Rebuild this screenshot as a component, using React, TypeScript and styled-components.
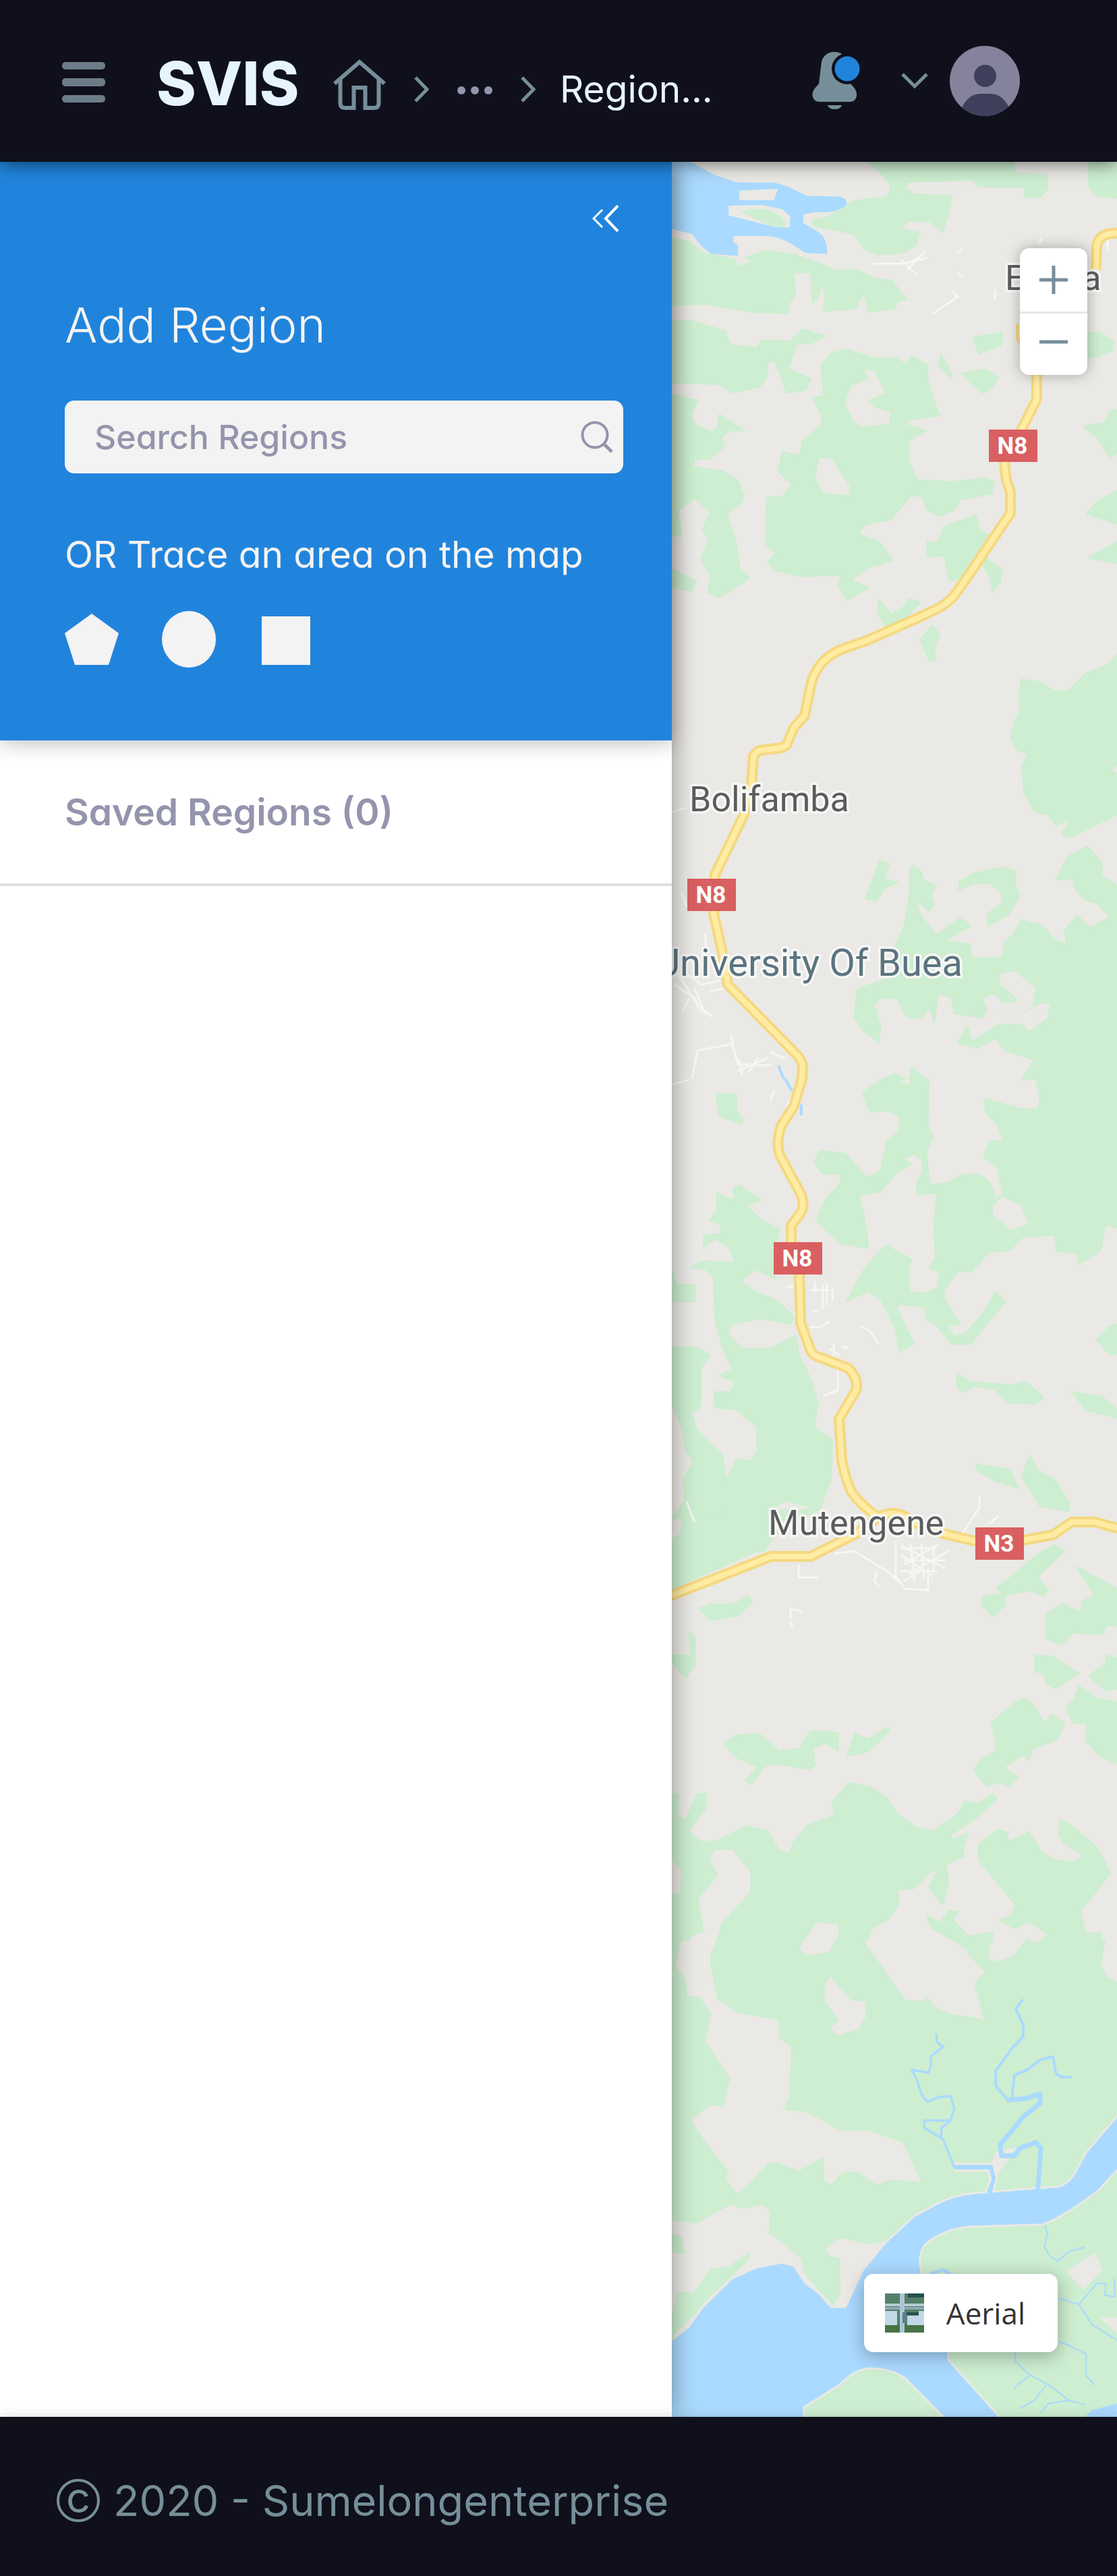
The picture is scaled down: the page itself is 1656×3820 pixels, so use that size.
import React from "react";
import styled, { createGlobalStyle } from "styled-components";

const color = {
  night: "#0f101b",
  blue: "#2184dc",
  slate: "#768e9a",
  lilac: "#9494ad",
  paper: "#f3f3f3",
  ice: "#e6f4ff",
  land: "#eae9e5",
  green: "#cdeed0",
  water: "#aadaff",
  shield: "#d95f60",
};

const GlobalStyle = createGlobalStyle`
  * { box-sizing: border-box; }
  body { margin: 0; background: ${color.night}; }
  body, button, input {
    font-family: Inter, "Open Sans", sans-serif;
    font-feature-settings: "cv11";
  }
  h1, h2, p, ol { margin: 0; padding: 0; }
`;

const Page = styled.div`
  display: flex;
  flex-direction: column;
  min-height: 100vh;
`;

const Header = styled.header`
  position: relative;
  z-index: 3;
  display: flex;
  align-items: center;
  justify-content: space-between;
  height: 240px;
  padding: 0 144px 0 92px;
  background: ${color.night};
  box-shadow: 0 4px 24px rgba(0, 0, 0, 0.5);
`;

const HeaderGroup = styled.div`
  display: flex;
  align-items: center;
`;

const IconButton = styled.button`
  display: block;
  padding: 0;
  border: 0;
  background: none;
  color: ${color.slate};
  cursor: pointer;
  svg { display: block; }
`;

const Logo = styled.a`
  width: 262px;
  margin-left: 76px;
  padding-top: 8px;
  color: ${color.ice};
  font-size: 89px;
  font-weight: 800;
  line-height: 96px;
  text-decoration: none;
`;

const Crumbs = styled.ol`
  display: flex;
  align-items: center;
  gap: 42px;
  padding-top: 24px;
  list-style: none;
  color: ${color.slate};
  svg { display: block; }
`;

const Crumb = styled.li`
  display: flex;
  align-items: center;
`;

const CurrentCrumb = styled.li`
  margin-left: -6px;
  color: ${color.ice};
  font-size: 55px;
  line-height: 64px;
`;

const Account = styled(IconButton)`
  display: flex;
  align-items: center;
  gap: 32px;
  margin-left: 60px;
`;

const Main = styled.main`
  position: relative;
  flex: 1;
  display: grid;
  grid-template-columns: minmax(0, 83fr) minmax(0, 55fr);
`;

const Sidebar = styled.aside`
  position: relative;
  z-index: 1;
  background: #fff;
  box-shadow: 0 0 36px rgba(0, 0, 0, 0.4);
`;

const AddPanel = styled.section`
  display: flex;
  flex-direction: column;
  align-items: flex-start;
  padding: 64px 72px 108px 96px;
  background: ${color.blue};
  color: ${color.paper};
  box-shadow: 0 4px 28px rgba(0, 0, 0, 0.25);
`;

const Collapse = styled(IconButton)`
  align-self: flex-end;
  margin-right: 6px;
  color: #fff;
`;

const Title = styled.h1`
  margin-top: 94px;
  font-size: 72px;
  font-weight: 300;
  line-height: 88px;
`;

const SearchBox = styled.label`
  display: flex;
  align-items: center;
  width: 100%;
  height: 108px;
  margin-top: 68px;
  padding: 0 15px 0 44px;
  border-radius: 14px;
  background: ${color.paper};
  color: ${color.lilac};
  svg { flex: none; }
`;

const SearchInput = styled.input`
  flex: 1;
  min-width: 0;
  padding: 0;
  border: 0;
  outline: 0;
  background: none;
  color: ${color.lilac};
  font-size: 50px;
  font-weight: 500;
  line-height: 64px;
  &::placeholder { color: ${color.lilac}; opacity: 1; }
`;

const Hint = styled.p`
  margin-top: 84px;
  font-size: 55px;
  line-height: 72px;
`;

const Tools = styled.div`
  display: flex;
  align-items: center;
  gap: 64px;
  margin-top: 48px;
`;

const Tool = styled(IconButton)`
  color: ${color.paper};
`;

const Saved = styled.section`
  padding: 72px 96px;
  border-bottom: 4px solid #e0e0e0;
`;

const SavedTitle = styled.h2`
  color: ${color.lilac};
  font-size: 55px;
  font-weight: 600;
  line-height: 68px;
`;

const MapPane = styled.section`
  position: relative;
  overflow: hidden;
  background: ${color.land};
`;

const MapDrawing = styled.svg`
  position: absolute;
  inset: 0;
  width: 100%;
  height: 100%;
`;

const PlaceName = styled.text<{ $large?: boolean }>`
  font-family: Roboto, sans-serif;
  font-size: ${(p) => (p.$large ? 56 : 52)}px;
  paint-order: stroke;
  stroke: #f7f7f5;
  stroke-width: 7px;
  stroke-linejoin: round;
`;

const ShieldText = styled.text`
  font-family: Roboto, sans-serif;
  font-size: 35px;
  font-weight: 700;
  fill: #fff;
`;

const ZoomControl = styled.div`
  position: absolute;
  top: 128px;
  right: 44px;
  width: 100px;
  border-radius: 14px;
  background: #fff;
  box-shadow: 0 0 20px rgba(0, 0, 0, 0.3);
`;

const ZoomButton = styled(IconButton)`
  display: flex;
  align-items: center;
  justify-content: center;
  width: 100%;
  height: 94px;
  & + & {
    padding-bottom: 8px;
    border-top: 3px solid #e6e6e6;
  }
`;

const LayerButton = styled.button`
  position: absolute;
  right: 88px;
  bottom: 96px;
  display: flex;
  align-items: center;
  gap: 33px;
  height: 116px;
  padding: 0 48px 0 31px;
  border: 0;
  border-radius: 14px;
  background: #fff;
  box-shadow: 0 6px 28px rgba(0, 0, 0, 0.3);
  color: #333;
  font-family: "Open Sans", sans-serif;
  font-size: 44px;
  line-height: 60px;
  cursor: pointer;
`;

const Footer = styled.footer`
  position: relative;
  z-index: 2;
  display: flex;
  align-items: center;
  gap: 20px;
  height: 236px;
  padding: 12px 84px 0;
  background: ${color.night};
  color: ${color.slate};
  font-size: 63px;
  line-height: 80px;
  box-shadow: 0 0 16px rgba(0, 0, 0, 0.15);
`;

const CopyrightSign = styled.span`
  display: flex;
  align-items: center;
  justify-content: center;
  width: 64px;
  height: 64px;
  padding-bottom: 10px;
  border: 4px solid ${color.slate};
  border-radius: 50%;
  line-height: 48px;
`;

const Chevron = () => (
  <svg width="22" height="39" viewBox="0 0 22 39" fill="none" stroke="currentColor" strokeWidth="5">
    <path d="M2 2 19 19.500 2 37" />
  </svg>
);

/* Every tile of the map is traced on its own grid and scaled into place. */
type TileData = { y: number; sy: number; land: string[]; holes: string[] };

const tiles: TileData[] = [
  {
    y: 230,
    sy: 0.4464,
    land: [
      "700,22 1210,22 1210,60 1245,62 1320,65 1328,110 1300,140 1245,140 1245,105 1085,105 1065,82 1000,85 840,88 832,110 860,130 990,135 985,180 960,255 915,220 840,220 812,245 880,258 865,300 820,325 740,330 690,315 650,262 510,235 505,218 560,205 640,155 700,145 765,140 780,105 745,60",
      "1470,22 1568,22 1568,142 1490,135 1468,100",
      "14,275 80,290 130,328 230,345 250,372 300,352 270,340 340,318 440,330 530,360 590,385 660,380 720,410 780,415 835,480 800,485 795,510 700,520 685,460 665,490 655,510 545,518 550,455 538,430 525,470 505,490 500,390 440,390 445,460 425,490 420,525 300,522 130,495 14,500",
      "14,550 80,550 200,585 220,632 315,640 325,615 430,618 470,578 550,602 500,625 450,628 420,710 500,745 480,780 415,790 395,735 370,680 350,690 345,740 320,770 225,790 180,762 14,755",
      "625,645 720,675 800,675 830,695 850,668 910,700 905,740 930,820 950,865 840,880 830,895 900,915 840,950 840,1010 870,1080 1000,1085 1105,1073 1140,1085 1130,1125 1020,1145 1000,1180 950,1200 905,1180 890,1135 850,1130 780,1210 690,1228 665,1260 740,1285 785,1345 700,1370 640,1410 700,1438 625,1478 595,1430 605,1395 470,1400 400,1385 370,1380 350,1350 380,1320 342,1295 345,1138 400,1135 435,1095 385,1050 400,985 460,1000 470,950 530,900 540,870 505,805 545,800 535,700 570,660",
      "14,795 105,815 80,865 95,895 150,920 175,905 180,860 265,915 215,915 185,940 200,965 150,1008 95,1010 88,1035 190,1050 245,1080 265,1130 255,1160 205,1190 240,1290 250,1370 285,1405 180,1468 140,1455 150,1400 115,1340 145,1275 120,1245 148,1190 95,1140 35,1180 50,1265 14,1265",
      "14,1375 100,1415 85,1448 14,1435",
      "1075,1195 1090,1245 1150,1275 1110,1340 1168,1380 1160,1420 1135,1450 1125,1400 1100,1360 1020,1405 985,1415 965,1330 905,1335 905,1285 940,1290 965,1235",
      "735,1475 780,1525 820,1505 840,1475 880,1485 840,1530 770,1590 735,1520",
      "1065,605 1170,590 1165,630 1085,660",
      "955,665 990,725 990,740 942,695",
      "1025,725 1105,712 1155,740 1125,780 1095,790",
      "1464,590 1510,590 1555,620 1550,650 1490,672 1464,672",
      "1450,900 1520,890 1550,845 1568,850 1568,990 1545,1005 1505,945",
      "1568,1115 1500,1150 1462,1192 1568,1225",
      "1568,1285 1470,1338 1568,1355",
    ],
    holes: [
      "690,715 720,720 755,790 690,815 720,840 775,855 770,890 680,900 650,880 622,825 640,770 705,745",
      "530,1010 570,1010 635,1105 630,1128 540,1120 518,1070",
    ],
  },
  {
    y: 900,
    sy: 0.4464,
    land: [
      "925,60 950,95 930,130 935,180 915,180 880,110",
      "1568,160 1530,195 1460,220 1400,278 1350,280 1300,250 1235,240 1225,290 1230,345 1210,380 1197,435 1225,480 1260,485 1235,530 1245,620 1280,680 1325,688 1355,725 1405,708 1375,755 1400,768 1568,690 1568,555 1545,545 1568,525",
      "740,842 772,855 755,905 805,915 755,935 730,975 690,970",
      "845,870 860,858 885,880 895,910 935,925 920,960 930,990 910,1010 865,970 880,1020 935,1090 1020,1035 1060,1058 965,1110 1055,1120 1060,1165 1170,1165 1175,1115 1210,1085 1235,1040 1310,1060 1350,1105 1395,1125 1385,1075 1430,1025 1475,1068 1545,1030 1500,985 1460,975 1425,940 1415,905 1355,905 1395,830 1465,795 1515,850 1515,895 1568,925 1568,1570 1235,1570 1280,1505 1180,1475 1145,1435 1080,1465 1010,1448 1045,1395 1065,1445 1150,1390 1230,1385 1260,1412 1325,1370 1338,1320 1305,1312 1250,1345 1170,1338 1115,1335 1100,1365 1000,1350 990,1300 945,1282 930,1380 915,1330 880,1368 835,1362 800,1300 745,1298 720,1320 745,1400 735,1445 680,1405 652,1360 660,1270 800,1225 795,1125 825,1060 845,950",
      "1015,940 1018,912 1070,885 1170,865 1215,880 1212,920 1228,960 1190,1020 1120,1058 1115,1020 1165,985 1165,950 1130,920 1070,918",
      "750,1570 795,1550 830,1570",
      "845,1570 850,1530 905,1570",
    ],
    holes: [
      "1165,1220 1210,1212 1280,1265 1270,1330 1240,1345 1190,1340 1225,1305 1180,1265 1160,1250",
      "1105,1300 1140,1290 1170,1320 1210,1315 1190,1345 1120,1360 1115,1330",
    ],
  },
  {
    y: 1600,
    sy: 0.4464,
    land: [
      "170,50 240,50 240,105 265,135 255,148 180,125",
      "1285,0 1300,60 1290,102 1230,100 1105,65 1110,110 1150,150 1175,210 1125,205 1102,260 1155,300 1168,385 1145,398 1125,345 1090,318 1030,318 980,345 915,352 902,240 925,195 908,150 912,0 845,0 850,25 790,0 750,0 680,45 705,108 770,105 810,125 805,175 765,205 745,300 720,320 690,325 620,248 530,238 512,275 540,315 600,315 605,345 550,400 518,470 600,545 700,562 690,480 668,385 740,375 800,310 850,285 820,265 860,248 890,275 890,310 870,340 870,385 940,378 930,480 935,595 912,628 950,640 940,695 900,712 845,708 838,640 850,600 760,552 690,625 625,738 700,705 745,735 795,830 808,905 860,880 800,765 805,748 900,758 900,795 945,825 990,880 1060,880 1115,810 1180,740 1145,708 1100,780 1040,845 1000,855 975,820 1020,815 965,730 965,705 1010,640 1060,640 1120,575 1195,568 1240,525 1350,518 1358,572 1430,578 1435,615 1510,570 1530,482 1568,495 1568,0",
      "1568,815 1540,825 1497,865 1545,918 1568,910",
      "1010,980 1055,1005 1200,1018 1250,1005 1312,1058 1280,1078 1190,1075 1140,1030 1065,1020 1035,1040 1010,1025",
      "1412,1040 1515,1055 1568,1100 1568,1125 1460,1100",
      "1075,1280 1195,1298 1225,1360 1140,1335 1080,1300",
      "1265,1250 1290,1300 1350,1330 1403,1410 1400,1435 1300,1420 1235,1320",
      "172,380 235,405 228,365 250,352 325,403 275,420 320,465 392,500 380,540 370,542 370,650 380,665 305,632 255,672 300,705 380,735 440,790 430,815 330,795 220,815 210,850 260,895 360,895 445,852 460,920 500,1000 525,1080 510,1155 575,1200 570,1330 530,1430 410,1400 360,1430 360,1530 340,1568 14,1568 14,1530 50,1510 50,1460 14,1460 60,1400 55,1330 90,1270 65,1240 50,1160 14,1080 14,890 90,890 150,915 115,960 115,1080 105,1100 80,1100 100,1165 190,1250 205,1335 240,1265 290,1268 312,1240 312,1155 240,1098 165,1092 162,1040 220,1040 235,1005 180,985 225,965 190,890 165,800 160,660 130,630 80,628 120,605 235,610 215,560 165,530 125,560 125,520 180,515 190,485 145,468 172,440",
      "14,630 30,680 95,685 95,740 14,738",
    ],
    holes: ["1135,425 1165,395 1230,420 1255,480 1200,500 1140,455"],
  },
  {
    y: 2200,
    sy: 0.4464,
    land: [
      "360,90 530,85 400,150 360,190 310,225 14,350 14,215 45,180 50,130 200,90",
      "1150,345 1200,310 1230,285 1300,230 1350,205 1385,225 1290,310 1330,355 1310,372 1260,355 1180,372 1175,405 1135,442 1092,400 1105,372 1165,368",
      "1425,275 1568,350 1568,475 1530,470 1520,502 1415,495 1375,535 1320,515 1320,435 1380,398 1440,430 1450,390 1490,372 1450,310",
      "1282,570 1345,575 1435,630 1355,680 1320,665 1315,630 1282,625",
      "1530,568 1568,580 1568,680 1535,690 1470,640 1530,595",
      "1435,672 1500,715 1568,725 1568,930 1510,905 1460,855 1460,798 1415,795 1390,745 1420,715",
      "1130,795 1215,725 1250,715 1285,745 1315,800 1340,765 1385,795 1360,850 1275,880 1260,920 1240,900 1170,945 1225,975 1190,1005 1155,990 1115,1005 1068,955 1090,920 1150,885",
      "108,415 150,402 235,400 280,372 295,395 240,440 150,455",
      "75,495 95,510 95,600 62,645 20,600 14,570 80,570",
      "195,865 245,835 320,832 390,890 460,880 500,820 595,828 595,888 550,862 505,880 515,935 490,950 390,930 340,938 290,1000 272,985 315,940 240,910",
      "655,830 700,850 770,808 772,825 700,890 625,905",
      "14,1030 38,1030 35,1100 60,1120 105,1030 135,1030 132,1080 70,1155 115,1190 170,1188 275,1138 350,1155 385,1215 425,1230 440,1190 490,1135 585,1100 575,1055 635,993 710,1010 760,1040 800,1095 870,1145 930,1155 1015,1095 1035,1055 1085,1065 1135,1030 1148,1050 1085,1105 990,1165 990,1185 1050,1160 1030,1210 1035,1238 970,1265 980,1320 960,1400 912,1340 940,1290 925,1282 860,1345 800,1350 808,1395 770,1445 710,1480 695,1530 720,1568 14,1568 14,1365 45,1365 50,1280 14,1250",
      "1085,1200 1150,1150 1188,1160 1185,1190 1260,1158 1310,1230 1360,1252 1420,1258 1452,1238 1380,1190 1365,1165 1370,1120 1400,1130 1500,1210 1545,1295 1440,1420 1460,1495 1510,1492 1510,1510 1540,1530 1540,1568 1195,1568 1255,1515 1290,1530 1330,1498 1260,1455 1210,1478 1160,1450 1200,1435 1215,1400 1085,1250",
      "905,1435 950,1460 980,1420 1015,1420 995,1450 1050,1505 1135,1490 1130,1568 1085,1568 1020,1530 920,1475",
    ],
    holes: [
      "165,1220 225,1218 285,1290 285,1355 185,1460 150,1568 50,1568 85,1505 130,1490 110,1380 180,1300 148,1250",
      "520,1460 590,1468 595,1500 560,1550 480,1568 465,1540",
    ],
  },
  {
    y: 2880,
    sy: 0.4592,
    land: ["14,30 1568,30 1568,1540 14,1540"],
    holes: [
      "50,0 150,0 145,70 170,185 240,230 385,255 385,310 428,340 422,500 400,545 480,550 600,610 700,612 820,650 878,770 780,765 730,780 660,738 610,740 570,778 550,770 545,690 460,735 380,708 350,710 285,775 245,810 205,765 215,740 130,640 85,575 150,530 195,532 220,440 135,320 155,230 115,175 70,170 65,120 30,75",
      "690,0 1005,0 1102,95 1068,135 1102,250 1070,240 990,230 940,210 895,165 895,188 830,185 760,90",
      "470,0 580,0 560,30 490,40 465,20",
      "1130,0 1240,0 1200,45 1150,60 1120,50",
      "1530,0 1568,0 1568,125 1535,110 1515,75",
      "570,115 600,150 640,190 685,195 690,240 660,280 595,300 570,280 600,250 550,190 550,140",
      "14,900 100,912 220,850 265,865 330,850 355,870 350,940 460,1020 480,1080 570,1170 400,1080 200,1150 14,1290",
      "555,990 600,958 700,978 765,970 700,1060 620,1190 580,1175 605,1140 605,1020 565,1010",
      "1395,1065 1490,1005 1515,1060 1450,1120",
      "1515,1215 1568,1215 1568,1260",
      "1145,680 1215,665 1150,750 1130,725",
    ],
  },
];

const cropX = 0.4247;

const Tile = ({ tile }: { tile: TileData }) => (
  <g transform={`translate(990 ${tile.y}) scale(${cropX} ${tile.sy})`} strokeLinejoin="round" strokeWidth="5">
    {tile.land.map((points) => (
      <polygon key={points} points={points} fill={color.green} stroke={color.green} />
    ))}
    {tile.holes.map((points) => (
      <polygon key={points} points={points} fill={color.land} stroke={color.land} />
    ))}
  </g>
);

const highways = [
  "M1514 480 L1514 500 Q1537 530 1537 560 L1537 592 L1517 632 L1489 685 L1492 712 L1498 730 V761 L1432 859 L1414 884 Q1404 896 1385 905 L1359 917 L1287 949 L1245 964 Q1225 974 1217 985 Q1205 1000 1202 1016 L1193 1061 L1177 1079 L1166 1105 L1158 1109 L1125 1113 L1117 1121 L1114 1163 L1103 1208 L1060 1297 L1058 1355 L1071 1413 L1079 1460 L1185 1568 L1190 1579 L1189 1600 L1177 1640 L1158 1670 Q1150 1694 1156 1713 L1187 1770 Q1194 1788 1187 1799 L1173 1817 V1841 L1185 1890 L1187 1962 L1202 2003 Q1206 2011 1216 2013 L1258 2029 Q1272 2044 1270 2060 L1244 2104 L1248 2166 Q1254 2196 1262 2212 Q1276 2232 1302 2250",
  "M990 2368 L1143 2308 L1202 2308 L1270 2274 L1302 2250 Q1330 2236 1351 2256 L1398 2274 L1444 2285 L1517 2284 L1561 2276 L1589 2257 L1623 2257 L1660 2267",
  "M1625 400 L1626 364 Q1630 344 1660 346",
];

const streets = [
  "M1295 391 H1340 L1375 382 M1335 385 L1360 408 M1345 400 L1372 372 M1352 388 L1365 380 M1418 376 L1426 370 M1382 466 L1420 440 L1412 432 M1420 405 L1428 412 M1475 430 V444 M1540 362 L1545 352 M1642 370 V355",
  "M996 1204 L1018 1198 M1010 1322 L1018 1344 M1000 1460 L1030 1480 L1040 1500 M1012 1440 L1040 1460 L1068 1454 M1022 1480 L1012 1500 M1030 1466 L1046 1505 M1040 1495 L1056 1508 M1002 1438 L1035 1492 M1046 1384 V1410 M1052 1470 L1074 1466",
  "M1026 1600 L1034 1558 L1086 1548 L1094 1578 L1144 1580 M1084 1534 L1088 1560 M1094 1588 L1140 1568 M1100 1595 L1096 1572 M1110 1590 L1124 1568 M1142 1560 L1164 1570 M996 1608 L1022 1601 M1142 1632 L1148 1618 M1166 1642 L1172 1630",
  "M1166 1910 L1176 1907 M1200 1913 H1230 M1208 1900 V1918 M1220 1904 V1940 M1226 1902 V1936 M1234 1910 V1930 M1204 1944 H1214 M1200 1968 H1215 L1230 1960 M1274 1966 L1290 1974 L1302 1992 M1230 2000 L1245 2010 M1236 1992 V2018 M1248 1998 H1258 M1242 2030 V2062 L1220 2070",
  "M1018 2226 L1030 2258 M1420 2284 L1452 2236 V2218 M1466 2260 L1480 2248 M1184 2320 V2339 H1212 M1236 2304 L1266 2300 L1318 2332 L1332 2345 M1328 2285 V2338 L1342 2356 L1376 2358 V2325 M1300 2330 L1296 2345 L1306 2354 M1172 2400 V2386 L1190 2390 M1170 2404 L1176 2414",
  "M1336 2292 L1400 2325 M1336 2306 L1384 2338 M1340 2320 L1392 2290 M1348 2334 L1406 2300 M1336 2296 H1388 M1340 2314 H1402 M1334 2330 H1390 M1350 2290 L1356 2345 M1366 2290 L1370 2340 M1384 2296 V2330 M1340 2345 L1364 2330",
];

const waterways: Array<[number, string]> = [
  [8, "M938 295 V320 L960 338 L918 370 V400 L910 422 L852 412 L870 445 L885 490 L905 515 L950 500 L988 497 L1000 540 L985 578 L955 600 V630 M985 576 H895 V600 L960 635 L980 680 L1000 727"],
  [14, "M1000 727 H1128 L1138 765 L1122 812"],
  [9, "M1240 185 L1215 215 L1242 270 L1240 305 L1200 345 L1145 415 V465 L1190 513 M1202 500 L1210 430 L1260 410 L1300 380 L1345 370 L1355 425 L1375 436 H1410"],
  [16, "M1185 510 L1250 505 L1300 490 V520 L1240 565 L1160 655 L1165 690 H1210 L1230 665 L1285 647 L1303 665 L1292 800"],
  [5, "M1315 910 L1325 940 L1315 985 L1335 1015 L1360 1030 L1400 1000 L1455 985 M1365 1150 L1435 1170 L1500 1100 L1530 1105 L1525 1140 L1560 1145 V1085 M1435 1170 L1480 1235 L1568 1285 M1365 1290 L1395 1300 L1460 1330 V1400 L1490 1430 M1210 1320 L1215 1355 L1260 1395 L1330 1430 L1400 1480 L1460 1495 M1260 1400 L1210 1440 M1320 1430 L1280 1480 L1230 1505 M1400 1480 L1330 1490 L1300 1520"],
  [10, "M915 1072 L960 1058 L1000 1078"],
];

const shields: Array<[string, number, number]> = [
  ["N8", 1466, 637],
  ["N8", 1019, 1303],
  ["N8", 1147, 1842],
  ["N3", 1446, 2265],
];

const RegionMap = () => (
  <MapDrawing viewBox="996 240 660 3344" preserveAspectRatio="xMinYMin slice" role="img" aria-label="Map of Buea">
    <rect x="996" y="240" width="660" height="3344" fill={color.land} />
    {tiles.map((tile) => (
      <Tile key={tile.y} tile={tile} />
    ))}
    <g transform={`translate(990 230) scale(${cropX} 0.4464)`}>
      <path
        fill={color.water}
        d="M14 22H80L160 65 240 90 375 92 420 105 485 135 600 138Q625 145 625 160 620 180 555 190L510 190 473 197V225L530 258Q560 285 557 328L480 325 440 300Q390 268 340 268H230V290L246 300 244 335 150 328 115 300 85 262 14 245Z"
      />
      <path fill={color.land} d="M250 118 385 112 370 150 250 150ZM212 168 330 166 400 180 428 205 425 240 380 240 300 222 212 200Z" />
      <path fill={color.green} d="M255 188 Q330 165 390 200L415 228 400 240 360 235Z" />
    </g>
    <g transform={`translate(990 2880) scale(${cropX} 0.4592)`} fill="none" strokeLinejoin="round">
      <polygon
        fill={color.green}
        points="285,1000 280,1030 130,1160 100,1200 30,1260 14,1280 14,1200 35,1130 90,1130 150,1055 210,1048"
      />
      <polygon fill={color.green} points="14,940 50,950 60,1010 14,1000" />
      <path d="M1000 727H1128L1138 765 1122 812" stroke={color.land} strokeWidth="30" />
      {waterways.map(([width, d]) => (
        <path key={d} d={d} stroke={color.water} strokeWidth={width} />
      ))}
      <path
        fill={color.water}
        stroke={color.land}
        strokeWidth="7"
        d="M0 1295 75 1240 120 1180 225 1085 310 1050 400 1035 440 1045 480 1100 530 1135 570 1178 620 1178 680 1060 760 970 860 885 930 850Q1000 812 1100 808L1280 795 1360 790Q1405 780 1430 730L1460 680 1575 555V730L1500 805 1440 845Q1370 890 1310 912L1050 920Q970 925 900 975 870 1010 885 1065L980 1200V1350L1170 1545H975L830 1410Q780 1375 700 1377 650 1380 600 1430L475 1502V1545H0Z"
      />
      <path fill={color.water} d="M1450 1540 1480 1512 1568 1490V1540Z" />
      <path stroke={color.water} strokeWidth="16" d="M1124 795V825M1292 780V815" />
    </g>
    <g fill="none" stroke="#f7f6f3" strokeWidth="3">
      {streets.map((d) => (
        <path key={d} d={d} />
      ))}
    </g>
    <path d="M1154 1580 L1162 1600 M1164 1600 L1174 1618 M1188 1638 V1654" stroke={color.water} strokeWidth="4" />
    <g fill="none" strokeLinejoin="round">
      {highways.map((d) => (
        <path key={d} d={d} stroke="#f5d880" strokeWidth="16" />
      ))}
      {highways.map((d) => (
        <path key={d} d={d} stroke="#ffeca3" strokeWidth="8" />
      ))}
    </g>
    <PlaceName x="1490" y="430" fill="#5a5c5e">Ekona</PlaceName>
    <PlaceName x="1022" y="1203" fill="#5a5c5e">Bolifamba</PlaceName>
    <PlaceName $large x="1427" y="1447" textAnchor="end" fill="#5b7480">University Of Buea</PlaceName>
    <PlaceName x="1139" y="2276" fill="#5a5c5e">Mutengene</PlaceName>
    {shields.map(([name, x, y]) => (
      <g key={`${x}-${y}`}>
        <rect x={x} y={y} width="72" height="48" fill={color.shield} />
        <ShieldText x={x + 35} y={y + 36} textAnchor="middle">{name}</ShieldText>
      </g>
    ))}
  </MapDrawing>
);

export default function App() {
  return (
    <Page>
      <GlobalStyle />
      <Header>
        <HeaderGroup>
          <IconButton aria-label="Open menu">
            <svg width="64" height="64" viewBox="0 -4 64 64" fill="#6c7d89">
              <rect width="64" height="11" rx="5" />
              <rect y="24" width="64" height="12" rx="5" />
              <rect y="49" width="64" height="11" rx="5" />
            </svg>
          </IconButton>
          <Logo href="#">SVIS</Logo>
          <nav aria-label="Breadcrumb">
            <Crumbs>
              <Crumb>
                <IconButton as="a" href="#" aria-label="Home">
                  <svg width="78" height="88" viewBox="0 0 78 88" fill="none" stroke="currentColor" strokeWidth="6">
                    <path d="M2 36 39 4 76 36" />
                    <path d="M10.500 28V65Q10.500 72 17.500 72H30.500V42H47.500V72H60.500Q67.500 72 67.500 65V28" />
                  </svg>
                </IconButton>
              </Crumb>
              <Crumb aria-hidden="true"><Chevron /></Crumb>
              <Crumb>
                <IconButton aria-label="Show hidden levels">
                  <svg width="52" height="18" viewBox="0 0 52 18" fill={color.lilac}>
                    <circle cx="6" cy="11" r="6" />
                    <circle cx="26" cy="11" r="6" />
                    <circle cx="46" cy="11" r="6" />
                  </svg>
                </IconButton>
              </Crumb>
              <Crumb aria-hidden="true"><Chevron /></Crumb>
              <CurrentCrumb>Region...</CurrentCrumb>
            </Crumbs>
          </nav>
        </HeaderGroup>
        <HeaderGroup>
          <IconButton aria-label="Notifications">
            <svg width="72" height="90" viewBox="0 0 72 90">
              <path
                fill="currentColor"
                d="M33 2C22 2 14.500 9 13.500 20L10 49 4 56C-3 65 1 76 11 76H56C66 76 69 65 63 56L57 49 52 20C51 9 44 2 33 2Z"
              />
              <path fill="currentColor" d="M23 81H44Q42 87 33.500 87 25 87 23 81Z" />
              <circle cx="52" cy="27" r="23" fill={color.night} />
              <circle cx="52" cy="27" r="18.500" fill={color.blue} />
            </svg>
          </IconButton>
          <Account aria-label="Account">
            <svg width="40" height="24" viewBox="0 0 40 24" fill="none" stroke="currentColor" strokeWidth="5">
              <path d="M2 2 20 20 38 2" />
            </svg>
            <svg width="104" height="104" viewBox="0 0 104 104">
              <clipPath id="face"><circle cx="52" cy="52" r="52" /></clipPath>
              <g clipPath="url(#face)">
                <rect width="104" height="104" fill="#85839c" />
                <circle cx="52.500" cy="44.500" r="16.500" fill="#403f5b" />
                <path d="M16 96Q26 71 46 71H60Q80 71 90 96V104H16Z" fill="#403f5b" />
              </g>
            </svg>
          </Account>
        </HeaderGroup>
      </Header>
      <Main>
        <Sidebar>
          <AddPanel>
            <Collapse aria-label="Collapse sidebar">
              <svg width="40" height="40" viewBox="0 0 40 40" fill="none" stroke="currentColor">
                <path d="M38 1 20 20 38 39" strokeWidth="4" />
                <path d="M15 7 2 20 15 33" strokeWidth="3" />
              </svg>
            </Collapse>
            <Title>Add Region</Title>
            <SearchBox>
              <SearchInput type="text" placeholder="Search Regions" aria-label="Search Regions" />
              <svg width="48" height="48" viewBox="0 0 48 48" fill="none" stroke="currentColor" strokeWidth="4">
                <circle cx="21" cy="21" r="18.500" />
                <path d="M34 34 46 46" strokeWidth="5" />
              </svg>
            </SearchBox>
            <Hint>OR Trace an area on the map</Hint>
            <Tools>
              <Tool aria-label="Draw a polygon">
                <svg width="80" height="76" viewBox="0 0 80 76" fill="currentColor">
                  <path d="M40 0 80 29 65 76H15L0 29Z" />
                </svg>
              </Tool>
              <Tool aria-label="Draw a circle">
                <svg width="80" height="84" viewBox="0 0 80 84" fill="currentColor">
                  <ellipse cx="40" cy="42" rx="40" ry="42" />
                </svg>
              </Tool>
              <Tool aria-label="Draw a rectangle">
                <svg width="80" height="76" viewBox="0 0 80 76" fill="currentColor">
                  <rect x="4" y="4" width="72" height="72" />
                </svg>
              </Tool>
            </Tools>
          </AddPanel>
          <Saved>
            <SavedTitle>Saved Regions (0)</SavedTitle>
          </Saved>
        </Sidebar>
        <MapPane>
          <RegionMap />
          <ZoomControl>
            <ZoomButton aria-label="Zoom in">
              <svg width="42" height="42" viewBox="0 0 42 42" stroke="currentColor" strokeWidth="5">
                <path d="M21 0V42M0 21H42" />
              </svg>
            </ZoomButton>
            <ZoomButton aria-label="Zoom out">
              <svg width="42" height="6" viewBox="0 0 42 6" stroke="currentColor" strokeWidth="5">
                <path d="M0 3H42" />
              </svg>
            </ZoomButton>
          </ZoomControl>
          <LayerButton>
            <svg width="58" height="58" viewBox="0 0 58 58" aria-hidden="true">
              <rect width="58" height="58" fill="#54806a" />
              <path d="M34 0H58V6H34ZM28 28H50V32H28Z" fill="#24504c" />
              <path d="M0 46H58V58H0Z" fill="#477446" />
              <rect y="26" width="18" height="21" fill="#c2d8e6" />
              <path d="M33 33H50V26H58V47H33Z" fill="#c2d8e6" />
              <rect y="20" width="58" height="4" fill="#8fa9b4" />
              <rect y="15" width="58" height="4" fill="#b5cdd2" />
              <rect x="22" width="7" height="58" fill="#aec6d4" />
              <rect x="26" y="28" width="6" height="16" fill="#5b7d91" />
            </svg>
            Aerial
          </LayerButton>
        </MapPane>
      </Main>
      <Footer>
        <CopyrightSign>c</CopyrightSign>
        <span>2020 - Sumelongenterprise</span>
      </Footer>
    </Page>
  );
}
